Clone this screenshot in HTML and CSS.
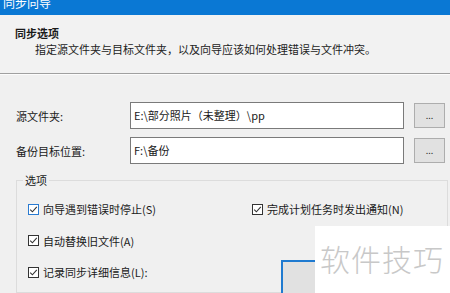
FILE: index.html
```html
<!DOCTYPE html>
<html lang="zh-CN">
<head>
    <meta charset="UTF-8">
    <title>同步向导</title>
    <link rel="stylesheet" href="styles.css">
</head>
<body>
    <div class="window">
        <div class="titlebar"><span>同步向导</span></div>

        <div class="header">
            <div class="header-title">同步选项</div>
            <div class="header-desc">指定源文件夹与目标文件夹，以及向导应该如何处理错误与文件冲突。</div>
        </div>

        <div class="content">
            <div class="field-row">
                <label class="field-label">源文件夹:</label>
                <div class="field-input">E:\部分照片（未整理）\pp</div>
                <button class="browse">...</button>
            </div>
            <div class="field-row">
                <label class="field-label">备份目标位置:</label>
                <div class="field-input">F:\备份</div>
                <button class="browse">...</button>
            </div>

            <div class="group">
                <span class="group-legend">选项</span>
                <div class="opt-row">
                    <div class="check">
                        <svg width="11" height="11" viewBox="0 0 11 11"><rect x="0.5" y="0.5" width="10" height="10" fill="#fff" stroke="#2a7bd1"/><path d="M2.2 5.6 L4.4 7.8 L8.8 2.8" fill="none" stroke="#333" stroke-width="1.1"/></svg>
                        <span>向导遇到错误时停止(S)</span>
                    </div>
                    <div class="check">
                        <svg width="11" height="11" viewBox="0 0 11 11"><rect x="0.5" y="0.5" width="10" height="10" fill="#fff" stroke="#333"/><path d="M2.2 5.6 L4.4 7.8 L8.8 2.8" fill="none" stroke="#333" stroke-width="1.1"/></svg>
                        <span>完成计划任务时发出通知(N)</span>
                    </div>
                </div>
                <div class="opt-row">
                    <div class="check">
                        <svg width="11" height="11" viewBox="0 0 11 11"><rect x="0.5" y="0.5" width="10" height="10" fill="#fff" stroke="#333"/><path d="M2.2 5.6 L4.4 7.8 L8.8 2.8" fill="none" stroke="#333" stroke-width="1.1"/></svg>
                        <span>自动替换旧文件(A)</span>
                    </div>
                </div>
                <div class="opt-row">
                    <div class="check">
                        <svg width="11" height="11" viewBox="0 0 11 11"><rect x="0.5" y="0.5" width="10" height="10" fill="#fff" stroke="#333"/><path d="M2.2 5.6 L4.4 7.8 L8.8 2.8" fill="none" stroke="#333" stroke-width="1.1"/></svg>
                        <span>记录同步详细信息(L):</span>
                    </div>
                    <button class="log-btn"></button>
                </div>
            </div>
        </div>

        <div class="watermark">软件技巧</div>
    </div>
</body>
</html>
```

FILE: styles.css
```css
* {
    margin: 0;
    padding: 0;
    box-sizing: border-box;
    font-family: 'Noto Sans CJK SC', 'Liberation Sans', sans-serif;
}

body {
    width: 450px;
    height: 293px;
    overflow: hidden;
    background: #f0f0f0;
    color: #1a1a1a;
    font-size: 11px;
}

.window {
    position: relative;
    height: 293px;
    overflow: hidden;
}

.titlebar {
    height: 15px;
    background: #0a78d4;
    overflow: hidden;
    color: #fff;
    padding-left: 3px;
}

.titlebar span {
    display: block;
    margin-top: -6px;
    font-size: 12px;
    line-height: 18px;
}

.header {
    height: 59px;
    background: #f2f2f2;
    border-bottom: 1px solid #a0a0a0;
    box-shadow: 0 1px 0 #fcfcfc;
    padding: 10px 0 0 15px;
}

.header-title {
    font-weight: bold;
    line-height: 16px;
}

.header-desc {
    padding-left: 20px;
    line-height: 16px;
    color: #222;
}

.content {
    padding: 28px 2px 0 16px;
}

.field-row {
    display: flex;
    align-items: center;
    height: 27px;
    margin-bottom: 8px;
}

.field-label {
    width: 114px;
    line-height: 16px;
}

.field-input {
    width: 274px;
    height: 27px;
    background: #fff;
    border: 1px solid #7a7a7a;
    padding: 4px 3px;
    line-height: 17px;
    white-space: nowrap;
    overflow: hidden;
}

.browse {
    width: 31px;
    height: 25px;
    margin-left: 10px;
    background: #e1e1e1;
    border: 1px solid #adadad;
    font-size: 9px;
    color: #333;
    line-height: 20px;
}

.group {
    position: relative;
    margin-top: 16px;
    border: 1px solid #dcdcdc;
    height: 113px;
    padding: 19px 0 0 11px;
}

.group-legend {
    position: absolute;
    top: -9px;
    left: 6px;
    padding: 0 2px;
    background: #f0f0f0;
    line-height: 16px;
}

.opt-row {
    display: flex;
    align-items: flex-start;
    height: 31.5px;
}

.check {
    display: flex;
    flex: none;
    align-items: center;
    gap: 4px;
    width: 224px;
    line-height: 18px;
}

.check + .check {
    width: auto;
}

.check svg {
    flex: none;
}

.log-btn {
    flex: none;
    width: 80px;
    height: 36px;
    margin-left: 29px;
    margin-top: -3px;
    background: #e1e1e1;
    border: 2px solid #1f7ad0;
}

.watermark {
    position: absolute;
    left: 315px;
    top: 226px;
    width: 135px;
    height: 67px;
    background: #fff;
    color: #c8c8c8;
    font-size: 30px;
    font-weight: 300;
    line-height: 40px;
    padding: 12px 0 0 5px;
    letter-spacing: 1px;
    white-space: nowrap;
}
```
